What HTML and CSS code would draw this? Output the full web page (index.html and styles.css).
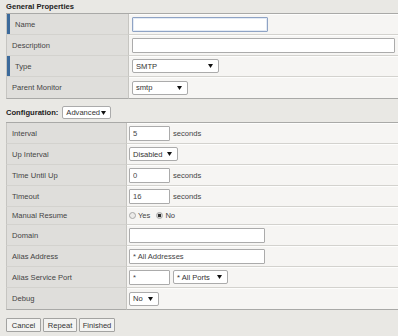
FILE: index.html
```html
<!DOCTYPE html>
<html lang="en">
<head>
<meta charset="UTF-8" />
<meta name="viewport" content="width=device-width, initial-scale=1" />
<title>New Monitor</title>
<link rel="stylesheet" href="styles.css">
</head>
<body>
  <div class="page">
    <h2 class="section-title">General Properties</h2>
    <div class="props props-general">
      <div class="lbl req">Name</div>
      <div class="val"><input class="txt txt-focus w136" type="text" value="" /></div>

      <div class="lbl">Description</div>
      <div class="val"><input class="txt w263" type="text" value="" /></div>

      <div class="lbl req">Type</div>
      <div class="val">
        <span class="select w87"><span>SMTP</span><svg width="5" height="4" viewBox="0 0 5 4"><path d="M0 0h5L2.5 4z"/></svg></span>
      </div>

      <div class="lbl last">Parent Monitor</div>
      <div class="val last">
        <span class="select w56"><span>smtp</span><svg width="5" height="4" viewBox="0 0 5 4"><path d="M0 0h5L2.5 4z"/></svg></span>
      </div>
    </div>

    <div class="config-bar">
      <span class="section-title">Configuration:</span>
      <span class="select w49"><span>Advanced</span><svg width="5" height="4" viewBox="0 0 5 4"><path d="M0 0h5L2.5 4z"/></svg></span>
    </div>

    <div class="props props-config">
      <div class="lbl">Interval</div>
      <div class="val"><input class="txt w41" type="text" value="5" /><span class="unit">seconds</span></div>

      <div class="lbl">Up Interval</div>
      <div class="val">
        <span class="select w49"><span>Disabled</span><svg width="5" height="4" viewBox="0 0 5 4"><path d="M0 0h5L2.5 4z"/></svg></span>
      </div>

      <div class="lbl">Time Until Up</div>
      <div class="val"><input class="txt w41" type="text" value="0" /><span class="unit">seconds</span></div>

      <div class="lbl">Timeout</div>
      <div class="val"><input class="txt w41" type="text" value="16" /><span class="unit">seconds</span></div>

      <div class="lbl short">Manual Resume</div>
      <div class="val short">
        <label class="radio"><input type="radio" name="resume" />Yes</label>
        <label class="radio"><input type="radio" name="resume" checked />No</label>
      </div>

      <div class="lbl">Domain</div>
      <div class="val"><input class="txt w136" type="text" value="" /></div>

      <div class="lbl">Alias Address</div>
      <div class="val"><input class="txt w136" type="text" value="* All Addresses" /></div>

      <div class="lbl">Alias Service Port</div>
      <div class="val">
        <input class="txt w41" type="text" value="*" />
        <span class="select w55"><span>* All Ports</span><svg width="5" height="4" viewBox="0 0 5 4"><path d="M0 0h5L2.5 4z"/></svg></span>
      </div>

      <div class="lbl last">Debug</div>
      <div class="val last">
        <span class="select w30"><span>No</span><svg width="5" height="4" viewBox="0 0 5 4"><path d="M0 0h5L2.5 4z"/></svg></span>
      </div>
    </div>

    <div class="actions">
      <button class="btn w35" type="button">Cancel</button>
      <button class="btn w34" type="button">Repeat</button>
      <button class="btn w36" type="button">Finished</button>
    </div>
  </div>
</body>
</html>
```

FILE: styles.css
```css
/* Dasar */
* {
  box-sizing: border-box;
}
body {
  margin: 0;
  background: #e9e8e4;
  font-family: 'Liberation Sans', Arial, sans-serif;
  font-size: 7.6px;
  color: #3a3a3a;
  overflow: hidden;
}
.page {
  padding-left: 6px;
  width: 404px;
}
.section-title {
  margin: 0;
  font-size: 7.6px;
  font-weight: 700;
  color: #222;
  line-height: 13px;
  height: 13px;
}

/* Tabel properti */
.props {
  display: grid;
  border-top: 1px solid #a9a9a7;
}
.props-general {
  grid-template-columns: 123px 1fr;
}
.props-config {
  grid-template-columns: 121px 1fr;
}
.lbl, .val {
  height: 21px;
  display: flex;
  align-items: center;
  border-bottom: 1px solid #d3d2ce;
}
.lbl {
  background: #dfdedb;
  border-left: 1px solid #c6c5c1;
  border-right: 1px solid #c6c5c1;
  padding-left: 5px;
  color: #444;
}
.lbl.req {
  box-shadow: inset 3px 0 0 #3d6b9b;
  padding-left: 8px;
}
.val {
  background: #f6f5f3;
  box-shadow: inset 0 1px 0 #fdfdfc;
  gap: 3px;
}
.props-general .val {
  padding-left: 3px;
}
.props-config .val {
  padding-left: 2px;
}
.lbl.last, .val.last {
  height: 22px;
  border-bottom: 1px solid #a9a9a7;
}
.lbl.short, .val.short {
  height: 18px;
}

/* Input */
.txt {
  height: 15px;
  margin: 0;
  padding: 0 3px;
  border: 1px solid #ababab;
  border-radius: 1px;
  background: #fff;
  font-family: inherit;
  font-size: 7.6px;
  color: #444;
  outline: none;
}
.txt-focus {
  border-color: #8fa3c4;
  box-shadow: inset 0 0 0 1px #e4ebf5;
}
.unit {
  color: #444;
}
.select {
  display: inline-flex;
  align-items: center;
  justify-content: space-between;
  height: 14px;
  padding: 0 5px 0 3px;
  border: 1px solid #ababab;
  border-radius: 2px;
  background: #fff;
  color: #333;
}
.select svg {
  fill: #111;
  flex: none;
}
.config-bar {
  display: flex;
  align-items: center;
  gap: 4px;
  height: 23px;
  padding-top: 4px;
}
.config-bar .select {
  height: 13px;
  padding-right: 4px;
}

/* Radio */
.radio {
  display: inline-flex;
  align-items: center;
  gap: 2px;
  margin-right: 3px;
  color: #444;
}
.radio input {
  appearance: none;
  margin: 0;
  width: 7px;
  height: 7px;
  border: 1px solid #a8a8a8;
  border-radius: 50%;
  background: #ecebe9;
}
.radio input:checked {
  background: radial-gradient(circle, #2f2f2f 0 1.6px, #d6d6d4 2px);
}

/* Tombol */
.actions {
  display: flex;
  gap: 2px;
  padding-top: 8px;
}
.btn {
  height: 14px;
  padding: 0;
  border: 1px solid #a3a3a1;
  border-radius: 1px;
  background: #f3f3f1;
  font-family: inherit;
  font-size: 7.6px;
  color: #333;
}

/* Lebar */
.w30 { width: 30px; }
.w34 { width: 34px; }
.w35 { width: 35px; }
.w36 { width: 36px; }
.w41 { width: 41px; }
.w49 { width: 49px; }
.w55 { width: 55px; }
.w56 { width: 56px; }
.w87 { width: 87px; }
.w136 { width: 136px; }
.w263 { width: 263px; }
```
